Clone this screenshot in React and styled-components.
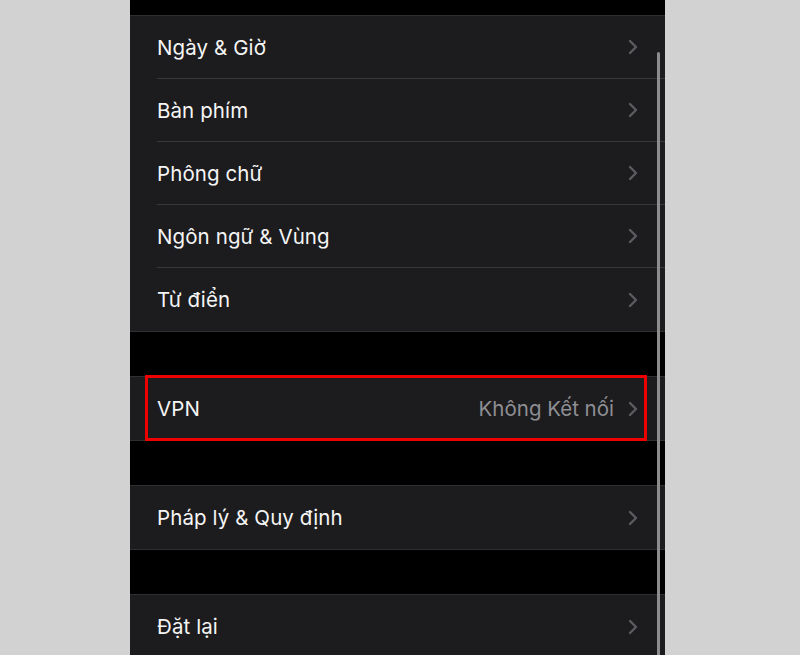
import React from 'react';
import styled, { createGlobalStyle } from 'styled-components';

const GlobalStyle = createGlobalStyle`
  html, body {
    margin: 0;
    padding: 0;
    background: #d2d2d2;
  }
  body {
    font-family: Inter, "Noto Sans", "Liberation Sans", sans-serif;
    -webkit-font-smoothing: antialiased;
  }
`;

const Page = styled.div`
  width: 800px;
  height: 655px;
  overflow: hidden;
  background: #d2d2d2;
`;

const Screen = styled.div`
  position: relative;
  width: 535px;
  height: 655px;
  margin-left: 130px;
  background: #000;
  display: flex;
  flex-direction: column;
  padding-top: 15px;
  box-sizing: border-box;
  overflow: hidden;
`;

const Group = styled.div`
  background: #1c1c1e;
  border-top: 1px solid #2f2f31;
  border-bottom: 1px solid #2f2f31;
  margin-bottom: ${props => props.gap || 44}px;
  flex-shrink: 0;
`;

const Row = styled.div`
  position: relative;
  height: 63px;
  padding-left: 27px;
  display: flex;
  align-items: stretch;
`;

const RowInner = styled.div`
  flex: 1;
  display: flex;
  align-items: center;
  padding-right: 27px;
  border-bottom: ${props => (props.last ? 'none' : '1px solid #38383a')};
`;

const Label = styled.span`
  flex: 1;
  color: #f5f5f5;
  font-size: 20.5px;
  letter-spacing: 0.1px;
`;

const Detail = styled.span`
  color: #8e8e93;
  font-size: 20.5px;
  margin-right: 14px;
`;

const Highlight = styled.div`
  position: absolute;
  top: -2px;
  bottom: -1px;
  left: 15px;
  right: 18px;
  border: 3px solid #ee0000;
  pointer-events: none;
`;

const ScrollBar = styled.div`
  position: absolute;
  top: 52px;
  bottom: -10px;
  left: 527px;
  width: 3px;
  border-radius: 2px;
  background: #8c8c8c;
`;

const Chevron = () => (
  <svg width="10" height="16" viewBox="0 0 10 16">
    <polyline
      points="2,2 8,8 2,14"
      fill="none"
      stroke="#5c5c60"
      strokeWidth="2.4"
      strokeLinecap="round"
      strokeLinejoin="round"
    />
  </svg>
);

const SettingsRow = ({ label, detail, last, highlighted }) => (
  <Row>
    <RowInner last={last}>
      <Label>{label}</Label>
      {detail && <Detail>{detail}</Detail>}
      <Chevron />
    </RowInner>
    {highlighted && <Highlight />}
  </Row>
);

const general = ['Ngày & Giờ', 'Bàn phím', 'Phông chữ', 'Ngôn ngữ & Vùng', 'Từ điển'];

const App = () => {
  return (
    <Page>
      <GlobalStyle />
      <Screen>
        <Group>
          {general.map((item, i) => (
            <SettingsRow key={item} label={item} last={i === general.length - 1} />
          ))}
        </Group>
        <Group>
          <SettingsRow label="VPN" detail="Không Kết nối" last highlighted />
        </Group>
        <Group>
          <SettingsRow label="Pháp lý & Quy định" last />
        </Group>
        <Group>
          <SettingsRow label="Đặt lại" last />
        </Group>
        <ScrollBar />
      </Screen>
    </Page>
  );
};

export default App;
